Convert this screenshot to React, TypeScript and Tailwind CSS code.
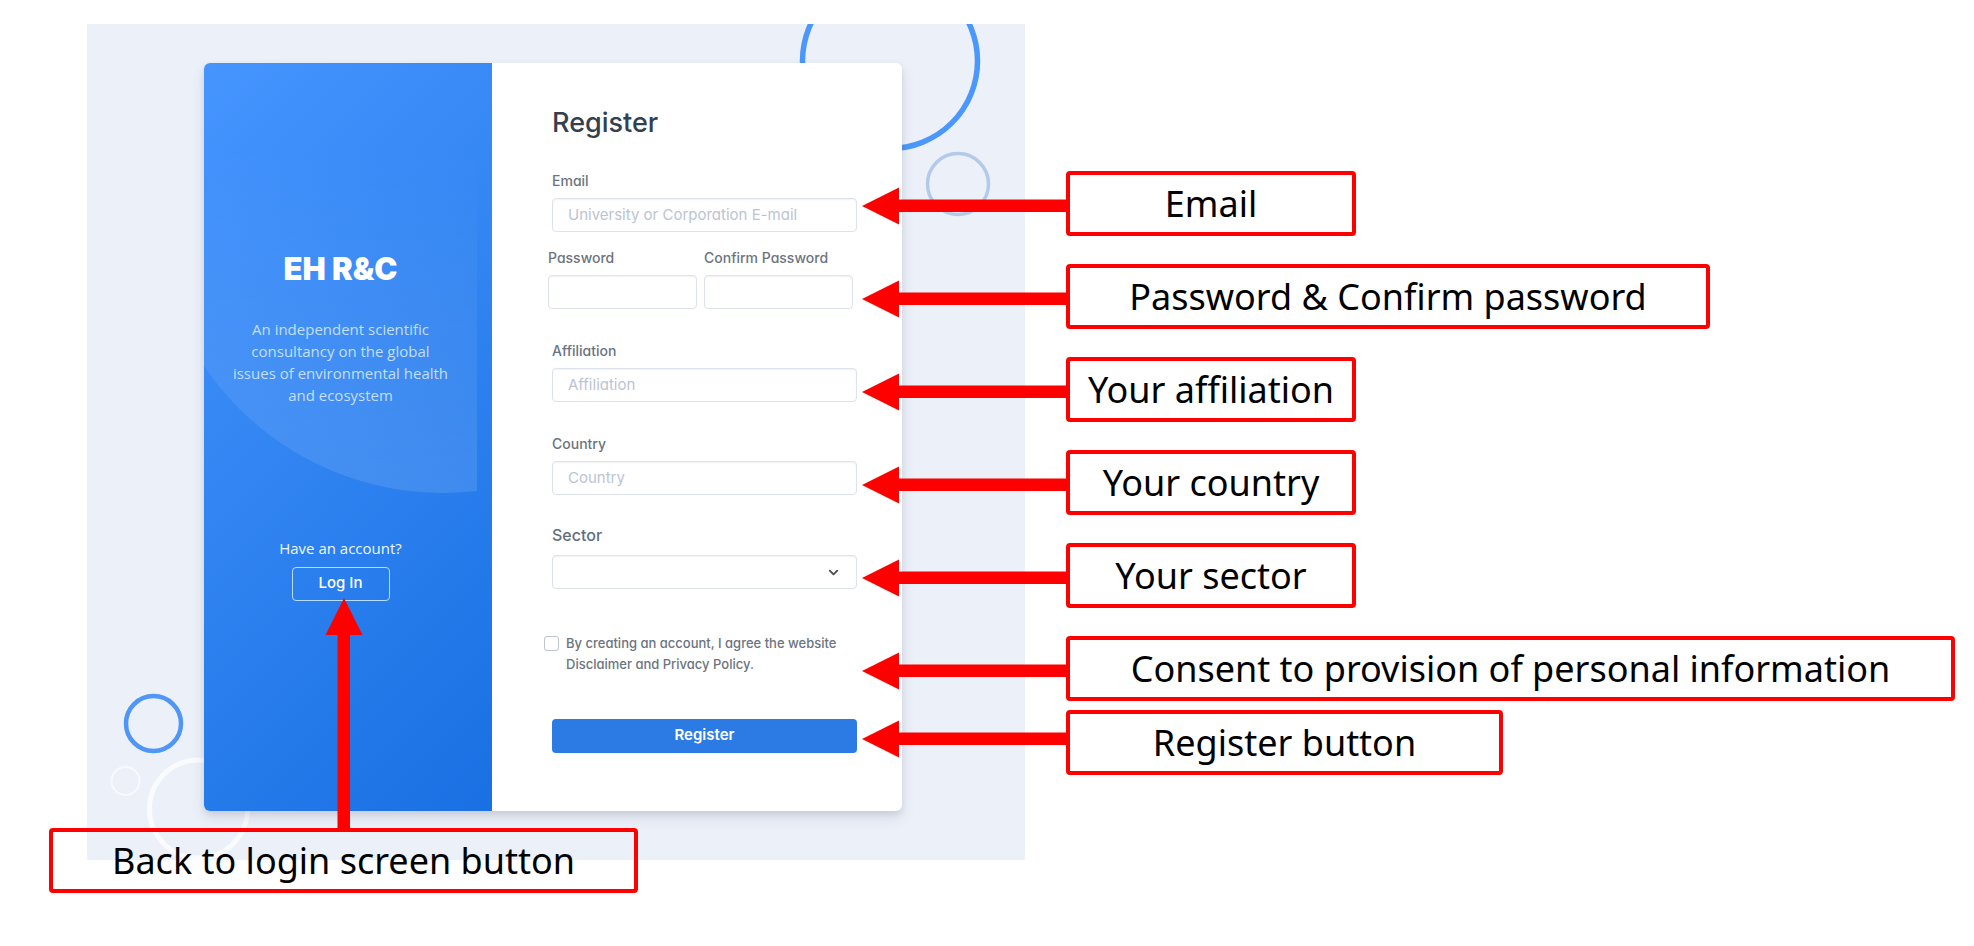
import { ChevronDown } from "lucide-react";

const control =
  "h-[34px] w-full rounded border border-[#dde2ec] bg-white px-[15px] pb-[2px] text-[15px] text-[#4d5969] shadow-[inset_0_1px_2px_rgba(0,0,0,0.06)] outline-none placeholder:text-[#bcc4d4]";

const callouts = [
  { text: "Email", box: "w-[290px] mb-7", arrow: "mt-4" },
  { text: "Password & Confirm password", box: "w-[644px] mb-7", arrow: "mt-4" },
  { text: "Your affiliation", box: "w-[290px] mb-7", arrow: "mt-4" },
  { text: "Your country", box: "w-[290px] mb-7", arrow: "mt-4" },
  { text: "Your sector", box: "w-[290px] mb-7", arrow: "mt-4" },
  { text: "Consent to provision of personal information", box: "w-[889px] mb-[9px]", arrow: "mt-4" },
  { text: "Register button", box: "w-[437px]", arrow: "mt-[10px]" },
];

const calloutBox =
  "flex h-[65px] items-center justify-center whitespace-nowrap rounded-sm border-4 border-[#ff0000] font-['Noto_Sans',sans-serif] text-[36px] leading-none text-black";

function Field({ id, label, type = "text", placeholder }: { id: string; label: string; type?: string; placeholder?: string }) {
  return (
    <div className="flex min-w-0 flex-1 flex-col gap-[7px]">
      <label htmlFor={id} className="text-[14px] font-medium leading-5 text-[#6b7480]">
        {label}
      </label>
      <input id={id} type={type} placeholder={placeholder} className={control} />
    </div>
  );
}

function Backdrop() {
  return (
    <svg className="absolute left-0 top-0" width="938" height="837" viewBox="87 24 938 837" fill="none" aria-hidden="true">
      <circle cx="890" cy="61" r="87.5" stroke="#4c97fb" strokeWidth="5.5" />
      <circle cx="958" cy="184" r="30.5" stroke="#b4cae8" strokeWidth="3.5" />
      <circle cx="153.5" cy="723.5" r="27.5" stroke="#4f96f6" strokeWidth="4.5" />
      <circle cx="125.5" cy="781" r="14" stroke="#f8fafd" strokeWidth="2" />
      <circle cx="198.5" cy="809" r="49" stroke="#f9fbfe" strokeWidth="5" />
    </svg>
  );
}

function Welcome() {
  return (
    <section className="relative w-[288px] shrink-0 overflow-hidden rounded-l-md bg-[linear-gradient(-45deg,#1970e2,#4695ff)]">
      <svg className="absolute left-0 top-0" width="273" height="440" viewBox="0 0 273 440" aria-hidden="true">
        <defs>
          <linearGradient id="glow" x1="0" y1="0" x2="0" y2="1">
            <stop offset="0.4" stopColor="#fff" stopOpacity="0" />
            <stop offset="1" stopColor="#fff" stopOpacity="0.11" />
          </linearGradient>
        </defs>
        <circle cx="239" cy="142" r="288" fill="url(#glow)" />
      </svg>
      <div className="relative flex w-[273px] flex-col items-center pt-[188px] text-center">
        <h1 className="text-[31px] font-black leading-9 text-white">EH R&amp;C</h1>
        <p className="mt-[31px] w-[220px] font-['Open_Sans',sans-serif] text-[15px] leading-[22px] text-[#c2dffd]">
          An independent scientific consultancy on the global issues of environmental health and ecosystem
        </p>
        <p className="mt-[131px] font-['Open_Sans',sans-serif] text-[15px] leading-[22px] text-[#eef6ff]">Have an account?</p>
        <button type="button" className="mt-2 h-[34px] w-[98px] rounded border border-[#b5dcf8] pb-[2px] text-[15px] font-medium text-white">
          Log In
        </button>
      </div>
    </section>
  );
}

function RegisterForm() {
  return (
    <form className="flex min-w-0 flex-1 flex-col pb-[58px] pl-[60px] pr-[45px] pt-11">
      <h2 className="text-[27px] font-medium leading-8 text-[#344050]">Register</h2>
      <div className="mt-8 flex">
        <Field id="email" label="Email" type="email" placeholder="University or Corporation E-mail" />
      </div>
      <div className="-ml-1 mr-1 mt-4 flex gap-[7px]">
        <Field id="password" label="Password" type="password" />
        <Field id="confirm" label="Confirm Password" type="password" />
      </div>
      <div className="mt-8 flex">
        <Field id="affiliation" label="Affiliation" placeholder="Affiliation" />
      </div>
      <div className="mt-8 flex">
        <Field id="country" label="Country" placeholder="Country" />
      </div>
      <label htmlFor="sector" className="mt-7 text-[16px] font-medium leading-6 text-[#5e6e82]">
        Sector
      </label>
      <div className="relative mt-2">
        <select id="sector" className={`${control} block appearance-none`}>
          <option value=""></option>
        </select>
        <ChevronDown className="pointer-events-none absolute right-4 top-[10px] text-[#4d5156]" size={15} strokeWidth={3} />
      </div>
      <div className="-ml-2 mt-11 flex items-start gap-[7px]">
        <input
          id="agree"
          type="checkbox"
          className="mt-[3px] h-[15px] w-[15px] shrink-0 appearance-none rounded-[3px] border border-[#bfc5ce] bg-white"
        />
        <label htmlFor="agree" className="text-[13px] font-medium leading-[21px] text-[#6b7480]">
          By creating an account, I agree the website Disclaimer and Privacy Policy.
        </label>
      </div>
      <button type="submit" className="mt-11 h-[34px] rounded bg-[#2c7be5] pb-[2px] text-[15px] font-semibold text-white">
        Register
      </button>
    </form>
  );
}

export default function App() {
  return (
    <main className="relative flex min-h-screen items-start overflow-x-hidden bg-white pb-[84px] pl-[87px] pt-6 font-['Inter',sans-serif] [font-feature-settings:'cv11']">
      <div className="relative w-[938px] shrink-0 overflow-hidden bg-[#ebf0f9] pb-[49px] pl-[117px] pr-[123px] pt-[39px]">
        <Backdrop />
        <div className="relative flex rounded-md bg-white shadow-[0_7px_14px_rgba(65,69,88,0.12),0_3px_6px_rgba(0,0,0,0.08)]">
          <Welcome />
          <RegisterForm />
        </div>
      </div>

      <aside className="relative -ml-[163px] flex flex-col pt-[147px]">
        {callouts.map((c) => (
          <div key={c.text} className="flex items-start">
            <svg className={`${c.arrow} shrink-0`} width="204" height="38" viewBox="0 0 204 38" fill="#ff0000" aria-hidden="true">
              <path d="M0 19 37 .5V12.5H204V25H37V37.5Z" />
            </svg>
            <div className={`${calloutBox} ${c.box}`}>{c.text}</div>
          </div>
        ))}
      </aside>

      <div className="absolute left-[49px] top-[598px] flex flex-col items-center">
        <svg width="38" height="230" viewBox="0 0 38 230" fill="#ff0000" aria-hidden="true">
          <path d="M19 0 37.5 37H25V230H12.5V37H.5Z" />
        </svg>
        <div className={`${calloutBox} w-[589px]`}>Back to login screen button</div>
      </div>
    </main>
  );
}
